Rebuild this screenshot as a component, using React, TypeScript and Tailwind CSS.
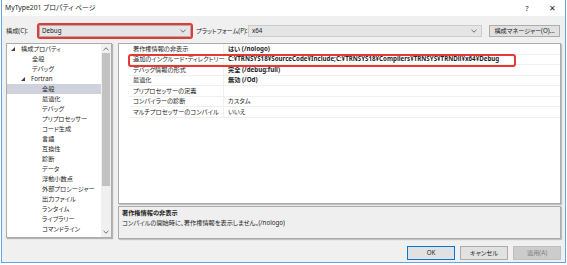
import React from "react";

const TREE: { label: string; level: number; open?: boolean; selected?: boolean }[] = [
  { label: "構成プロパティ", level: 0, open: true },
  { label: "全般", level: 1 },
  { label: "デバッグ", level: 1 },
  { label: "Fortran", level: 1, open: true },
  { label: "全般", level: 2, selected: true },
  { label: "最適化", level: 2 },
  { label: "デバッグ", level: 2 },
  { label: "プリプロセッサー", level: 2 },
  { label: "コード生成", level: 2 },
  { label: "言語", level: 2 },
  { label: "互換性", level: 2 },
  { label: "診断", level: 2 },
  { label: "データ", level: 2 },
  { label: "浮動小数点", level: 2 },
  { label: "外部プロシージャー", level: 2 },
  { label: "出力ファイル", level: 2 },
  { label: "ランタイム", level: 2 },
  { label: "ライブラリー", level: 2 },
  { label: "コマンドライン", level: 2 },
];

const PROPS: { name: string; value: string; bold?: boolean }[] = [
  { name: "著作権情報の非表示", value: "はい (/nologo)", bold: true },
  {
    name: "追加のインクルード・ディレクトリー",
    value: "C:¥TRNSYS18¥SourceCode¥Include;C:¥TRNSYS18¥Compilers¥TRNSYS¥TRNDll¥x64¥Debug",
    bold: true,
  },
  { name: "デバッグ情報の形式", value: "完全 (/debug:full)", bold: true },
  { name: "最適化", value: "無効 (/Od)", bold: true },
  { name: "プリプロセッサーの定義", value: "" },
  { name: "コンパイラーの診断", value: "カスタム" },
  { name: "マルチプロセッサーのコンパイル", value: "いいえ" },
];

function Chevron({ up = false }: { up?: boolean }) {
  return (
    <svg width="6" height="4" viewBox="0 0 6 4" className={up ? "rotate-180" : ""}>
      <path d="M0.5 0.8 L3 3.2 L5.5 0.8" fill="none" stroke="#606060" strokeWidth="0.9" />
    </svg>
  );
}

function Expander() {
  return (
    <svg width="4" height="4" viewBox="0 0 4 4">
      <path d="M4 0 L4 4 L0 4 Z" fill="#404040" />
    </svg>
  );
}

export default function App() {
  return (
    <div className="w-[567px] h-[265px] bg-white overflow-hidden font-['Noto_Sans','Noto_Sans_CJK_JP',sans-serif] [font-feature-settings:'palt'] text-[6.2px] leading-none text-[#1e1e1e] whitespace-nowrap">
      <div className="ml-[1px] w-[565px] h-[263px] border-x border-b border-[#62a6ea] flex flex-col">
        {/* Title bar */}
        <div className="h-[16px] bg-white flex items-center pl-[3px] pr-[3px]">
          <span className="text-[6.8px]">MyType201 プロパティ ページ</span>
          <span className="ml-auto w-[30px] text-center text-[7px]">?</span>
          <span className="w-[20px] text-center text-[8px]">✕</span>
        </div>

        <div className="flex-1 bg-[#f0f0f0] flex flex-col px-[4px] pt-[7px]">
          {/* Configuration row */}
          <div className="h-[16px] flex items-center">
            <span className="w-[31px]">構成(C):</span>
            <div className="w-[156px] h-[16px] border-2 border-[#e53935] rounded-[3px] flex items-center">
              <div className="flex-1 h-[12px] bg-[#e5e5e5] border border-[#adadad] flex items-center pl-[2px] pr-[4px]">
                <span>Debug</span>
                <span className="ml-auto">
                  <Chevron />
                </span>
              </div>
            </div>
            <span className="ml-[3px] w-[52px]">プラットフォーム(P):</span>
            <div className="w-[234px] h-[12px] bg-[#e5e5e5] border border-[#cccccc] flex items-center pl-[3px] pr-[4px]">
              <span>x64</span>
              <span className="ml-auto">
                <Chevron />
              </span>
            </div>
            <button className="ml-[7px] w-[71px] h-[12px] bg-[#e1e1e1] border border-[#adadad] flex items-center justify-center">
              構成マネージャー(O)...
            </button>
          </div>

          {/* Main area */}
          <div className="mt-[4px] h-[196px] flex">
            {/* Tree */}
            <div className="w-[106px] h-[195px] bg-white border border-[#acacac] shadow-[1px_1px_1px_rgba(0,0,0,0.25)] flex">
              <div className="flex-1 flex flex-col">
                {TREE.map((t, i) => (
                  <div
                    key={i}
                    className={`h-[10px] flex items-center shrink-0 ${t.selected ? "bg-[#cfd1dd]" : ""}`}
                  >
                    {t.level === 0 && (
                      <>
                        <span className="w-[8px] flex justify-end">
                          <Expander />
                        </span>
                        <span className="ml-[6px]">{t.label}</span>
                      </>
                    )}
                    {t.level === 1 && t.open && (
                      <>
                        <span className="w-[18px] flex justify-end">
                          <Expander />
                        </span>
                        <span className="ml-[6px]">{t.label}</span>
                      </>
                    )}
                    {t.level === 1 && !t.open && <span className="ml-[25px]">{t.label}</span>}
                    {t.level === 2 && <span className="ml-[35px]">{t.label}</span>}
                  </div>
                ))}
              </div>
              <div className="w-[10px] bg-[#f0f0f0] flex flex-col items-center">
                <div className="h-[9px] flex items-center justify-center">
                  <Chevron up />
                </div>
                <div className="w-[8px] h-[133px] bg-[#c2c2c2]" />
                <div className="flex-1" />
                <div className="h-[10px] flex items-center justify-center">
                  <Chevron />
                </div>
              </div>
            </div>

            {/* Right column */}
            <div className="ml-[6px] flex-1 flex flex-col">
              <div className="relative h-[161px] bg-white border border-[#acacac] shadow-[1px_1px_1px_rgba(0,0,0,0.2)]">
                <div className="ml-[10px] flex flex-col">
                  {PROPS.map((p, i) => (
                    <div key={i} className="h-[10.5px] flex items-center border-b border-[#f0f0f0]">
                      <div className="w-[95px] h-full pl-[4px] flex items-center border-r border-[#f0f0f0]">
                        {p.name}
                      </div>
                      <div className={`pl-[4px] ${p.bold ? "font-bold" : ""}`}>{p.value}</div>
                    </div>
                  ))}
                </div>
                <div className="absolute left-[9px] top-[10px] w-[388px] h-[13px] border-2 border-[#e53935] rounded-[3px]" />
              </div>
              <div className="mt-[2px] flex-1 bg-[#efefef] border border-[#acacac] shadow-[1px_1px_1px_rgba(0,0,0,0.2)] pl-[3px] pt-[3px]">
                <div className="font-bold">著作権情報の非表示</div>
                <div className="mt-[4px]">コンパイルの開始時に、著作権情報を表示しません。(/nologo)</div>
              </div>
            </div>
          </div>

          {/* Buttons */}
          <div className="mt-[7px] flex justify-end gap-[5px]">
            <button className="w-[48px] h-[14px] bg-[#e1e1e1] border border-[#0078d7] flex items-center justify-center">
              OK
            </button>
            <button className="w-[48px] h-[14px] bg-[#e1e1e1] border border-[#adadad] flex items-center justify-center">
              キャンセル
            </button>
            <button className="w-[48px] h-[14px] bg-[#cccccc] border border-[#bfbfbf] text-[#838383] flex items-center justify-center">
              適用(A)
            </button>
          </div>
        </div>
      </div>
    </div>
  );
}
